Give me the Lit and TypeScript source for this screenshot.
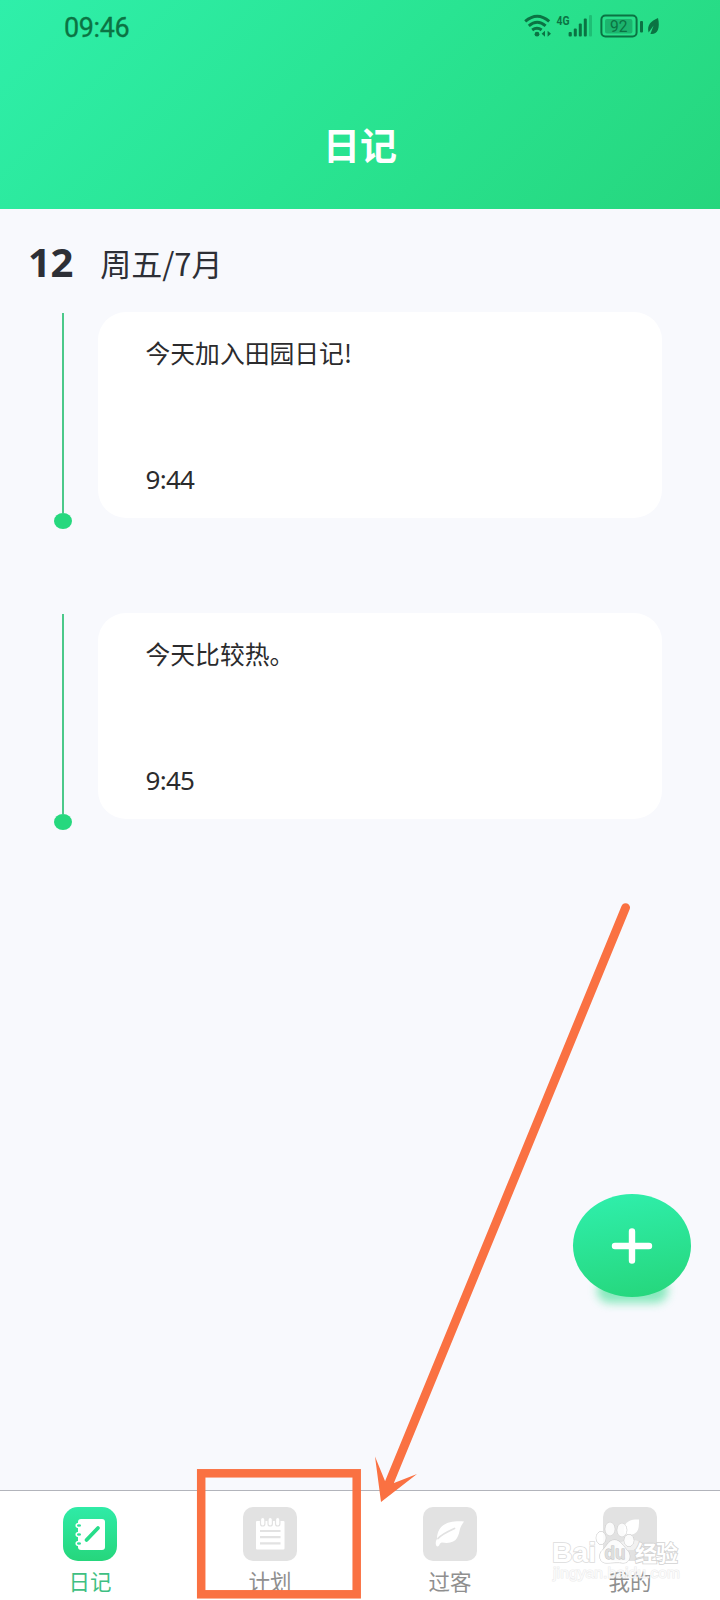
import { LitElement, html, svg, css } from "lit";
import { customElement, property } from "lit/decorators.js";

interface Entry {
  text: string;
  time: string;
}

const entries: Entry[] = [
  { text: "今天加入田园日记!", time: "9:44" },
  { text: "今天比较热。", time: "9:45" },
];

@customElement("status-bar")
class StatusBar extends LitElement {
  static styles = css`
    :host {
      display: flex;
      justify-content: space-between;
      height: 56px;
      padding: 0 58px 0 64px;
      color: #0b7343;
    }
    .clock {
      font: 400 27px/56px Roboto, sans-serif;
      letter-spacing: -0.4px;
      -webkit-text-stroke: 0.3px #0b7343;
    }
    svg {
      display: block;
    }
    .net {
      font: 700 13px Roboto, sans-serif;
    }
    .level {
      font: 400 16px Roboto, sans-serif;
    }
  `;
  render() {
    return html`
      <span class="clock">09:46</span>
      <svg width="140" height="56" viewBox="522 0 140 56" fill="none" stroke="#0b7343">
        <g stroke-width="3" stroke-linecap="butt">
          <path d="M525.2 21.4Q537.2 11.2 549.2 21.4" />
          <path d="M528.8 25.8Q537.2 18.8 545.6 25.8" />
          <path d="M532.2 30Q537 26.4 541.6 30" />
        </g>
        <g fill="#0b7343" stroke="none">
          <circle cx="537" cy="34.2" r="2.4" />
          <path d="M541.6 33.8l3.4-3v6zM551 33.8l-3.4-3v6z" />
          <text class="net" x="556.5" y="24.8" textLength="13" lengthAdjust="spacingAndGlyphs">4G</text>
          <rect x="568.6" y="32" width="3.2" height="4.6" rx="1" />
          <rect x="573.8" y="28.6" width="3" height="8" rx="1" />
          <rect x="578.8" y="23.6" width="3" height="13" rx="1" />
          <rect x="583.8" y="18.6" width="3" height="18" rx="1" />
          <rect x="589" y="15" width="3" height="21.6" rx="1" opacity=".3" />
          <rect x="605" y="19" width="27.4" height="14.4" rx="2" opacity=".4" />
          <rect x="640" y="21" width="3" height="11.4" rx="1" />
          <path d="M658 18C651 21 646.6 25 648.6 32.4L653.6 25.6L650.4 34C657 35 660.5 29 658 18Z" />
          <text class="level" x="610" y="32.2" textLength="17.5" lengthAdjust="spacingAndGlyphs">92</text>
        </g>
        <rect x="601.4" y="15.6" width="35.2" height="20.8" rx="4" stroke-width="2" />
      </svg>
    `;
  }
}

@customElement("diary-entry")
class DiaryEntry extends LitElement {
  @property() text = "";
  @property() time = "";
  static styles = css`
    :host {
      display: flex;
      gap: 26px;
      padding-left: 53.5px;
      height: 217px;
    }
    .rail {
      display: flex;
      flex-direction: column;
      align-items: center;
      width: 18px;
    }
    .line {
      width: 2px;
      height: 200px;
      margin-top: 1px;
      background: #4cc98a;
    }
    .dot {
      width: 18px;
      height: 16px;
      border-radius: 50%;
      background: #26d87e;
    }
    .card {
      box-sizing: border-box;
      display: flex;
      flex-direction: column;
      justify-content: space-between;
      width: 564px;
      height: 206px;
      padding: 21.5px 48px 21px;
      border-radius: 28px;
      background: #fff;
      color: #2b2b2d;
    }
    .text {
      font: 400 24.8px/36px "Noto Sans CJK SC", sans-serif;
    }
    .time {
      font: 400 26px/36px "Noto Sans", sans-serif;
      letter-spacing: -0.7px;
    }
  `;
  render() {
    return html`
      <div class="rail"><div class="line"></div><div class="dot"></div></div>
      <div class="card">
        <div class="text">${this.text}</div>
        <div class="time">${this.time}</div>
      </div>
    `;
  }
}

const tabs = [
  {
    label: "日记",
    active: true,
    icon: svg`
      <rect x="15" y="12" width="27" height="31" rx="3" fill="#fff" />
      <g fill="#2be398" stroke="#fff" stroke-width="1.5">
        <ellipse cx="16" cy="18.5" rx="2.8" ry="2" />
        <ellipse cx="16" cy="27.5" rx="2.8" ry="2" />
        <ellipse cx="16" cy="36.5" rx="2.8" ry="2" />
      </g>
      <path d="M23.5 33L35 21" stroke="#27dd8a" stroke-width="3.8" stroke-linecap="round" />`,
  },
  {
    label: "计划",
    active: false,
    icon: svg`
      <rect x="13" y="14" width="28.5" height="28.5" rx="1" fill="#fff" />
      <g fill="#fff" stroke="#e2e2e2" stroke-width="1.2">
        <rect x="17.5" y="10.5" width="4.4" height="8.5" rx="2.2" />
        <rect x="25" y="10.5" width="4.4" height="8.5" rx="2.2" />
        <rect x="32.5" y="10.5" width="4.4" height="8.5" rx="2.2" />
      </g>
      <path d="M17 24H37.5M17 30.2H37.5M17 36.400H37.5" stroke="#e2e2e2" stroke-width="2.2" />`,
  },
  {
    label: "过客",
    active: false,
    icon: svg`
      <path d="M41 14.5C30 13.5 14 15 14 32C12 35 12.5 39.5 14.5 39.5C17 39 16 36 19 35.5C34 38 35.5 29 37 22C38 18.5 39.5 17 41 14.5Z" fill="#fff" />
      <path d="M15 31.5C19 27 25 24.5 31.5 21.5" fill="none" stroke="#e2e2e2" stroke-width="1.8" stroke-linecap="round" />`,
  },
  {
    label: "我的",
    active: false,
    icon: svg`
      <path d="M36 12.5C27 12 20 15 21 25C22 28 25 28 29 27.5C36 26 36 20 36 12.5Z" fill="#fff" />
      <path d="M14 43C14 30 40 28 42 43Z" fill="#fff" opacity=".5" />`,
  },
];

@customElement("tab-bar")
class TabBar extends LitElement {
  static styles = css`
    :host {
      box-sizing: border-box;
      display: grid;
      grid-template-columns: repeat(4, 1fr);
      height: 110px;
      border-top: 1px solid #b2b4bb;
      background: #fff;
    }
    .tab {
      display: flex;
      flex-direction: column;
      align-items: center;
      gap: 4.5px;
      padding-top: 15.5px;
      color: #8f8f8f;
      font: 400 21.5px/32px "Noto Sans CJK SC", sans-serif;
    }
    .tab.active {
      color: #3fbf83;
    }
    svg {
      display: block;
    }
  `;
  render() {
    return tabs.map(
      (t) => html`
        <div class="tab ${t.active ? "active" : ""}">
          <svg width="54" height="54" viewBox="0 0 54 54">
            <defs>
              <linearGradient id="g" x1="0" y1="0" x2="0" y2="1">
                <stop stop-color="#2feba7" />
                <stop offset="1" stop-color="#26d67c" />
              </linearGradient>
            </defs>
            <rect width="54" height="54" rx=${t.active ? 15 : 10} fill=${t.active ? "url(#g)" : "#e2e2e2"} />
            ${t.icon}
          </svg>
          <span>${t.label}</span>
        </div>
      `
    );
  }
}

@customElement("app-root")
class AppRoot extends LitElement {
  static styles = css`
    :host {
      position: relative;
      display: flex;
      flex-direction: column;
      width: 720px;
      height: 1600px;
      overflow: hidden;
      background: #f8f9fd;
    }
    header {
      height: 209px;
      background: linear-gradient(135deg, #2fefaa 0%, #29e492 50%, #26d67d 100%);
    }
    h1 {
      margin: 0;
      padding-top: 60px;
      text-align: center;
      color: #fff;
      font: 700 37px/56px "Noto Sans CJK SC", sans-serif;
    }
    main {
      flex: 1;
    }
    .date {
      display: flex;
      align-items: center;
      gap: 27px;
      height: 103px;
      padding-left: 28px;
      color: #2d2f36;
    }
    .day {
      font: 700 40px/54px "Noto Sans", sans-serif;
      letter-spacing: -0.3px;
      padding-top: 2px;
    }
    .month {
      font: 400 31px/54px "Noto Sans CJK SC", sans-serif;
      padding-top: 4px;
    }
    .list {
      display: flex;
      flex-direction: column;
      gap: 84px;
    }
    .fab {
      position: absolute;
      left: 560px;
      top: 1180px;
    }
    .overlay {
      position: absolute;
      left: 0;
      top: 0;
      pointer-events: none;
    }
    .brand {
      font: 700 28px "Liberation Sans", sans-serif;
    }
    .brand-cn {
      font: 700 22px "Noto Sans CJK SC", sans-serif;
    }
    .du {
      font: 700 19px "Liberation Sans", sans-serif;
    }
    .site {
      font: 400 15.5px "Liberation Sans", sans-serif;
    }
  `;
  render() {
    return html`
      <header>
        <status-bar></status-bar>
        <h1>日记</h1>
      </header>
      <main>
        <div class="date"><span class="day">12</span><span class="month">周五/7月</span></div>
        <div class="list">
          ${entries.map((e) => html`<diary-entry .text=${e.text} .time=${e.time}></diary-entry>`)}
        </div>
      </main>
      <tab-bar></tab-bar>

      <svg class="fab" width="150" height="150" viewBox="560 1180 150 150">
        <defs>
          <linearGradient id="f" x1=".4" y1="0" x2=".6" y2="1">
            <stop stop-color="#2feeaa" />
            <stop offset="1" stop-color="#26d77d" />
          </linearGradient>
          <filter id="b" x="-30%" y="-60%" width="160%" height="220%">
            <feGaussianBlur stdDeviation="5" />
          </filter>
        </defs>
        <rect x="597" y="1277" width="71" height="26" rx="13" fill="#2bdc88" opacity=".55" filter="url(#b)" />
        <ellipse cx="632" cy="1245.5" rx="59" ry="51.5" fill="url(#f)" />
        <path d="M615 1246H649M632 1231.5V1260.5" stroke="#fff" stroke-width="6.4" stroke-linecap="round" />
      </svg>

      <svg class="overlay" width="720" height="1600" viewBox="0 0 720 1600">
        <g fill="#fff" stroke="#dcdcdc" stroke-width="1.6" paint-order="stroke">
          <text class="site" x="553" y="1578" textLength="127" fill-opacity=".8" stroke-opacity=".55" stroke-width="1.2">jingyan.baidu.com</text>
          <text class="brand" x="552" y="1562" textLength="44" lengthAdjust="spacingAndGlyphs">Bai</text>
          <text class="brand-cn" x="635" y="1560.5" textLength="43" stroke="#d2d2d2">经验</text>
          <g stroke="#c9c9c9" stroke-width="1" fill-opacity=".85">
            <ellipse cx="601" cy="1538" rx="4.8" ry="6.5" />
            <ellipse cx="610" cy="1529" rx="4.8" ry="6.7" />
            <ellipse cx="622" cy="1530" rx="4.8" ry="6.7" />
            <ellipse cx="629" cy="1540.5" rx="4.8" ry="6" />
            <path d="M614.5 1540C608 1540 606 1548 601.5 1551C598 1556 600 1563 606 1563C611 1563 619 1562 623 1563C630 1563 631.5 1556 628 1551C623.5 1547 621 1540 614.5 1540Z" />
          </g>
          <text class="du" x="604.5" y="1559" textLength="21" stroke="#bdbdbd" stroke-width=".8" fill="#dedede" lengthAdjust="spacingAndGlyphs">du</text>
        </g>
        <g stroke="#fa7142" fill="none">
          <rect x="201.2" y="1473.3" width="155.5" height="121" stroke-width="8.5" />
          <path d="M625.6 907.6L389.5 1482" stroke-width="8.8" stroke-linecap="round" />
          <path d="M381 1502L375 1456.5L385 1481L394 1483L417 1474Z" fill="#fa7142" stroke="none" />
        </g>
      </svg>
    `;
  }
}
